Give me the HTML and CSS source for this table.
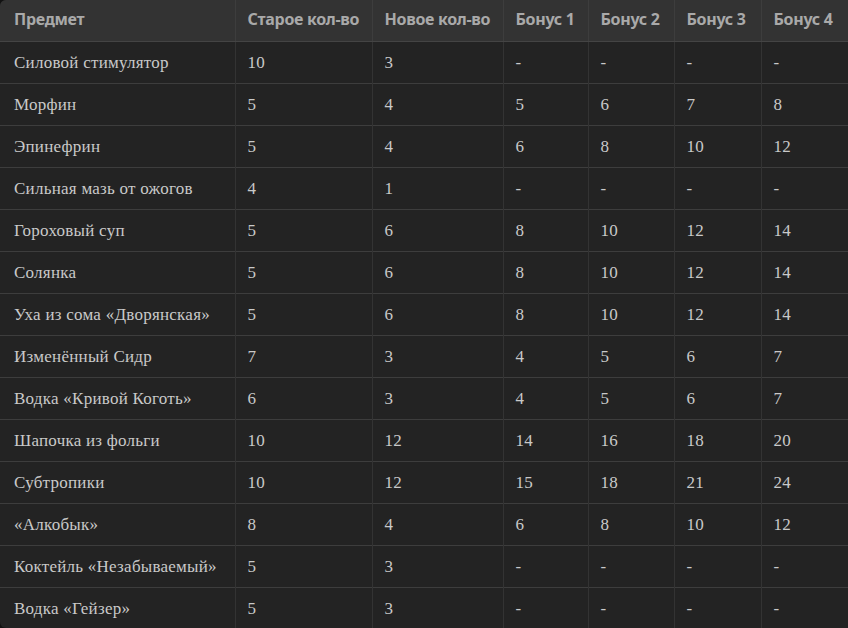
FILE: index.html
```html
<!DOCTYPE html>
<html lang="ru">
<head>
<meta charset="utf-8">
<link rel="stylesheet" href="styles.css">
</head>
<body>
<div class="wrap">
<table class="tbl">
<colgroup>
<col class="c1"><col class="c2"><col class="c3"><col class="c4"><col class="c5"><col class="c6"><col class="c7">
</colgroup>
<thead>
<tr><th>Предмет</th><th>Старое кол-во</th><th>Новое кол-во</th><th>Бонус 1</th><th>Бонус 2</th><th>Бонус 3</th><th>Бонус 4</th></tr>
</thead>
<tbody>
<tr><td>Силовой стимулятор</td><td>10</td><td>3</td><td>-</td><td>-</td><td>-</td><td>-</td></tr>
<tr><td>Морфин</td><td>5</td><td>4</td><td>5</td><td>6</td><td>7</td><td>8</td></tr>
<tr><td>Эпинефрин</td><td>5</td><td>4</td><td>6</td><td>8</td><td>10</td><td>12</td></tr>
<tr><td>Сильная мазь от ожогов</td><td>4</td><td>1</td><td>-</td><td>-</td><td>-</td><td>-</td></tr>
<tr><td>Гороховый суп</td><td>5</td><td>6</td><td>8</td><td>10</td><td>12</td><td>14</td></tr>
<tr><td>Солянка</td><td>5</td><td>6</td><td>8</td><td>10</td><td>12</td><td>14</td></tr>
<tr><td>Уха из сома «Дворянская»</td><td>5</td><td>6</td><td>8</td><td>10</td><td>12</td><td>14</td></tr>
<tr><td>Изменённый Сидр</td><td>7</td><td>3</td><td>4</td><td>5</td><td>6</td><td>7</td></tr>
<tr><td>Водка «Кривой Коготь»</td><td>6</td><td>3</td><td>4</td><td>5</td><td>6</td><td>7</td></tr>
<tr><td>Шапочка из фольги</td><td>10</td><td>12</td><td>14</td><td>16</td><td>18</td><td>20</td></tr>
<tr><td>Субтропики</td><td>10</td><td>12</td><td>15</td><td>18</td><td>21</td><td>24</td></tr>
<tr><td>«Алкобык»</td><td>8</td><td>4</td><td>6</td><td>8</td><td>10</td><td>12</td></tr>
<tr><td>Коктейль «Незабываемый»</td><td>5</td><td>3</td><td>-</td><td>-</td><td>-</td><td>-</td></tr>
<tr><td>Водка «Гейзер»</td><td>5</td><td>3</td><td>-</td><td>-</td><td>-</td><td>-</td></tr>
</tbody>
</table>
</div>
</body>
</html>
```
FILE: styles.css
```css
html, body {
  margin: 0;
  padding: 0;
  background: #121212;
  overflow: hidden;
}
.wrap {
  width: 848px;
  height: 628px;
  overflow: hidden;
  border-top-left-radius: 6px;
  border-bottom-left-radius: 6px;
  background: #232323;
}
.tbl {
  width: 848px;
  table-layout: fixed;
  border-collapse: collapse;
}
.c1 { width: 235px; }
.c2 { width: 137px; }
.c3 { width: 131px; }
.c4 { width: 85px; }
.c5 { width: 86px; }
.c6 { width: 87px; }
.c7 { width: 87px; }
.tbl th {
  height: 41px;
  box-sizing: border-box;
  padding: 0 12px 2px;
  text-align: left;
  background: #333333;
  color: #a9a9a9;
  font-family: "Noto Sans", sans-serif;
  font-weight: 700;
  font-size: 16px;
  letter-spacing: -0.3px;
  border-left: 1px solid #3d3d3d;
  border-bottom: 1px solid #444;
  white-space: nowrap;
}
.tbl td {
  height: 42px;
  box-sizing: border-box;
  padding: 1px 12px 0;
  color: #c9c9c9;
  font-family: "Liberation Serif", serif;
  font-size: 17px;
  letter-spacing: 0.25px;
  border-left: 1px solid #333;
  border-top: 1px solid #3d3d3d;
  white-space: nowrap;
}
.tbl th:first-child, .tbl td:first-child {
  border-left: none;
  padding-left: 14px;
}
.tbl tbody tr:first-child td { border-top: none; }
```
